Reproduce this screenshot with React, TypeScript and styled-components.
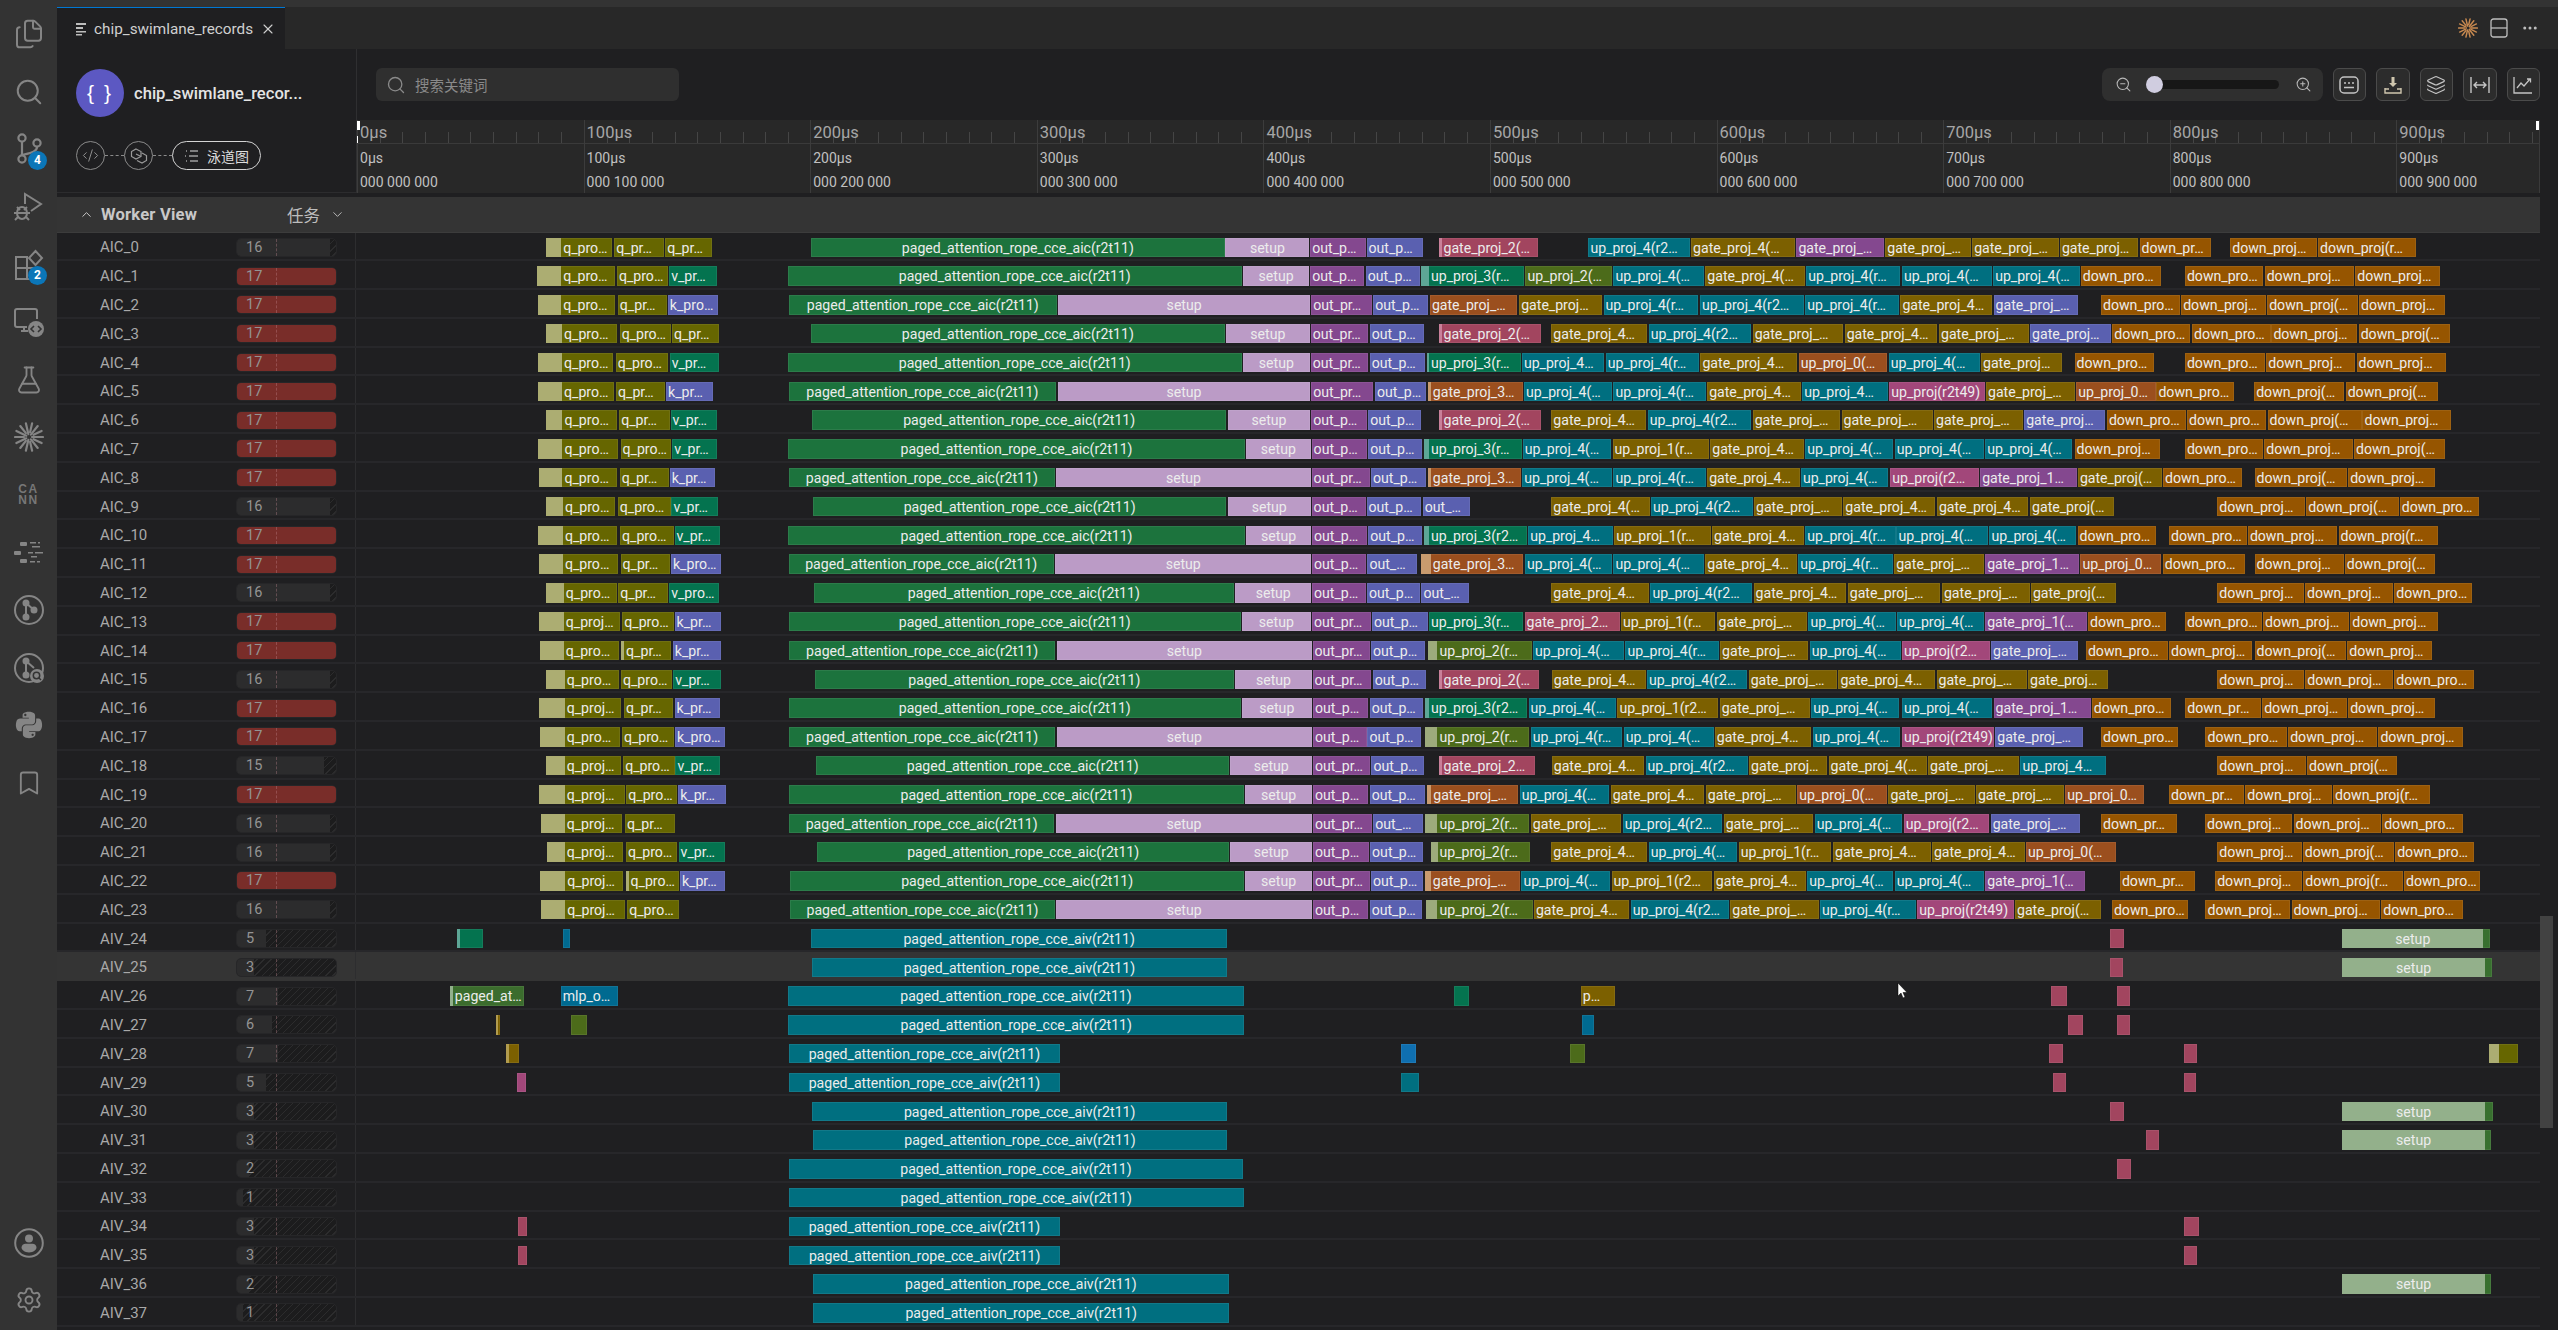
import React from 'react'
import styled, { createGlobalStyle } from 'styled-components'
import {
  Bookmark,
  ChevronDown,
  ChevronUp,
  CodeXml,
  Files,
  FlaskConical,
  Layers,
  MoreHorizontal,
  Search,
  Settings,
  X,
  ZoomIn,
  ZoomOut,
} from 'lucide-react'
import { FaPython } from 'react-icons/fa'

const UI_FONT = `Roboto, "Noto Sans CJK SC", sans-serif`

const GlobalStyle = createGlobalStyle`
  html, body { margin: 0; padding: 0; background: #333333; overflow: hidden; }
  * { box-sizing: border-box; }
  body { font-family: ${UI_FONT}; color: #cccccc; }
`

// coordinates were read from crops, each helper turns crop x into page x
const A = (x: number) => 500 + x / 2.24
const B = (x: number) => 1200 + x / 2.24
const C = (x: number) => 1900 + x / 2.383
const D = (x: number) => 400 + x / 1.742
const E = (x: number) => 1300 + x / 1.2464

type Bar = [number, number, string, string?, number?]

const AIC = 'paged_attention_rope_cce_aic(r2t11)'
const AIV = 'paged_attention_rope_cce_aiv(r2t11)'

const rowsData: { name: string; value: number; bars: Bar[] }[] = [
  { name: 'AIC_0', value: 16, bars: [
    [A(102), A(250), 'o', 'q_pro…', A(137)], [A(256), A(367), 'o', 'q_pr…'], [A(370), A(476), 'o', 'q_pr…'],
    [A(697), B(55), 'g', AIC], [B(57), B(245), 's', 'setup'], [B(247), B(371), 'p', 'out_p…'], [B(373), B(500), 'b', 'out_p…'],
    [B(535), B(757), 'r', 'gate_proj_2(…', B(541)], [B(870), B(1098), 'c', 'up_proj_4(r2…'], [B(1100), B(1333), 'y', 'gate_proj_4(…'],
    [B(1336), B(1533), 'p', 'gate_proj_…'], [B(1535), C(169), 'y', 'gate_proj_…'], [C(172), C(378), 'y', 'gate_proj_…'], [C(381), C(568), 'y', 'gate_proj…'],
    [C(571), C(742), 'd', 'down_pr…'], [C(787), C(994), 'd', 'down_proj…'], [C(996), C(1229), 'd', 'down_proj(r…'],
  ] },
  { name: 'AIC_1', value: 17, bars: [
    [A(83), A(258), 'o', 'q_pro…', A(137)], [A(262), A(376), 'o', 'q_pro…'], [A(379), A(486), 't', 'v_pr…'],
    [A(645), B(93), 'g', AIC], [B(96), B(245), 's', 'setup'], [B(247), B(368), 'p', 'out_p…'], [B(371), B(492), 'b', 'out_p…'],
    [B(495), B(726), 't', 'up_proj_3(r…', B(513)], [B(729), B(924), 'l', 'up_proj_2(…'], [B(926), B(1129), 'c', 'up_proj_4(…'], [B(1132), B(1355), 'y', 'gate_proj_4(…'],
    [B(1358), C(1), 'c', 'up_proj_4(r…'], [C(5), C(219), 'c', 'up_proj_4(…'], [C(222), C(428), 'c', 'up_proj_4(…'], [C(431), C(621), 'd', 'down_pro…'],
    [C(679), C(866), 'd', 'down_pro…'], [C(869), C(1083), 'd', 'down_proj…'], [C(1085), C(1287), 'd', 'down_proj…'],
  ] },
  { name: 'AIC_2', value: 17, bars: [
    [A(85), A(258), 'o', 'q_pro…', A(137)], [A(264), A(374), 'o', 'q_pr…'], [A(376), A(488), 'b', 'k_pro…'],
    [A(647), A(1247), 'g', AIC], [A(1250), B(247), 's', 'setup'], [B(249), B(385), 'p', 'out_pr…'], [B(388), B(511), 'b', 'out_p…'],
    [B(515), B(711), 'n', 'gate_proj_…'], [B(715), B(900), 'y', 'gate_proj…'], [B(904), B(1116), 'c', 'up_proj_4(r…'], [B(1120), B(1352), 'c', 'up_proj_4(r2…'],
    [B(1356), B(1565), 'c', 'up_proj_4(r…'], [C(1), C(220), 'y', 'gate_proj_4…'], [C(223), C(424), 'b', 'gate_proj_…'],
    [C(479), C(667), 'd', 'down_pro…'], [C(670), C(873), 'd', 'down_proj…'], [C(875), C(1091), 'd', 'down_proj(…'], [C(1094), C(1298), 'd', 'down_proj…'],
  ] },
  { name: 'AIC_3', value: 17, bars: [
    [A(102), A(262), 'o', 'q_pro…', A(139)], [A(268), A(382), 'o', 'q_pro…'], [A(385), A(491), 'o', 'q_pr…'],
    [A(697), B(55), 'g', AIC], [B(58), B(246), 's', 'setup'], [B(248), B(377), 'p', 'out_pr…'], [B(380), B(501), 'b', 'out_p…'],
    [B(535), B(764), 'r', 'gate_proj_2(…', B(541)], [B(787), B(1001), 'y', 'gate_proj_4…'], [B(1005), B(1235), 'c', 'up_proj_4(r2…'], [B(1238), B(1440), 'y', 'gate_proj_…'],
    [B(1444), C(88), 'y', 'gate_proj_4…'], [C(93), C(307), 'y', 'gate_proj_…'], [C(310), C(503), 'b', 'gate_proj…'],
    [C(506), C(691), 'd', 'down_pro…'], [C(696), C(883), 'd', 'down_pro…'], [C(885), C(1090), 'd', 'down_proj…'], [C(1093), C(1310), 'd', 'down_proj(…'],
  ] },
  { name: 'AIC_4', value: 17, bars: [
    [A(85), A(254), 'o', 'q_pro…', A(139)], [A(259), A(377), 'o', 'q_pro…'], [A(380), A(490), 't', 'v_pr…'],
    [A(645), B(93), 'g', AIC], [B(96), B(246), 's', 'setup'], [B(248), B(377), 'p', 'out_pr…'], [B(380), B(505), 'b', 'out_p…'],
    [B(508), B(718), 't', 'up_proj_3(r…', B(513)], [B(721), B(906), 'c', 'up_proj_4…'], [B(909), B(1118), 'c', 'up_proj_4(r…'], [B(1121), B(1338), 'y', 'gate_proj_4…'],
    [B(1341), B(1540), 'n', 'up_proj_0(…'], [B(1543), C(190), 'c', 'up_proj_4(…'], [C(193), C(386), 'y', 'gate_proj…'],
    [C(416), C(606), 'd', 'down_pro…'], [C(679), C(870), 'd', 'down_pro…'], [C(873), C(1085), 'd', 'down_proj…'], [C(1088), C(1301), 'd', 'down_proj…'],
  ] },
  { name: 'AIC_5', value: 17, bars: [
    [A(85), A(255), 'o', 'q_pro…', A(139)], [A(260), A(370), 'o', 'q_pr…'], [A(372), A(478), 'b', 'k_pr…'],
    [A(647), A(1245), 'g', AIC], [A(1249), B(247), 's', 'setup'], [B(249), B(388), 'p', 'out_pr…'], [B(392), B(507), 'b', 'out_p…'],
    [B(511), B(723), 'n', 'gate_proj_3…', B(517)], [B(726), B(923), 'c', 'up_proj_4(…'], [B(926), B(1133), 'c', 'up_proj_4(r…'], [B(1136), B(1346), 'y', 'gate_proj_4…'],
    [B(1349), B(1541), 'c', 'up_proj_4…'], [B(1544), C(203), 'm', 'up_proj(r2t49)'], [C(205), C(416), 'y', 'gate_proj_…'], [C(420), C(609), 'n', 'up_proj_0…'],
    [C(611), C(796), 'd', 'down_pro…'], [C(844), C(1059), 'd', 'down_proj(…'], [C(1062), C(1281), 'd', 'down_proj(…'],
  ] },
  { name: 'AIC_6', value: 17, bars: [
    [A(102), A(261), 'o', 'q_pro…', A(140)], [A(267), A(380), 'o', 'q_pr…'], [A(382), A(487), 't', 'v_pr…'],
    [A(699), B(59), 'g', AIC], [B(62), B(247), 's', 'setup'], [B(249), B(375), 'p', 'out_p…'], [B(377), B(494), 'b', 'out_p…'],
    [B(535), B(764), 'r', 'gate_proj_2(…', B(541)], [B(787), B(1000), 'y', 'gate_proj_4…'], [B(1003), B(1235), 'c', 'up_proj_4(r2…'], [B(1238), B(1434), 'y', 'gate_proj_…'],
    [B(1437), C(78), 'y', 'gate_proj_…'], [C(81), C(294), 'y', 'gate_proj_…'], [C(296), C(488), 'b', 'gate_proj…'],
    [C(493), C(681), 'd', 'down_pro…'], [C(684), C(873), 'd', 'down_pro…'], [C(876), C(1100), 'd', 'down_proj(…'], [C(1102), C(1312), 'd', 'down_proj…'],
  ] },
  { name: 'AIC_7', value: 17, bars: [
    [A(85), A(264), 'o', 'q_pro…', A(140)], [A(270), A(384), 'o', 'q_pro…'], [A(386), A(486), 't', 'v_pr…'],
    [A(645), B(101), 'g', AIC], [B(103), B(248), 's', 'setup'], [B(250), B(374), 'p', 'out_p…'], [B(377), B(498), 'b', 'out_p…'],
    [B(501), B(721), 't', 'up_proj_3(r…', B(513)], [B(723), B(921), 'c', 'up_proj_4(…'], [B(924), B(1141), 'y', 'up_proj_1(r…'], [B(1143), B(1353), 'y', 'gate_proj_4…'],
    [B(1356), B(1553), 'c', 'up_proj_4(…'], [B(1556), C(200), 'c', 'up_proj_4(…'], [C(203), C(410), 'c', 'up_proj_4(…'], [C(416), C(619), 'd', 'down_proj…'],
    [C(679), C(865), 'd', 'down_pro…'], [C(868), C(1080), 'd', 'down_proj…'], [C(1082), C(1298), 'd', 'down_proj(…'],
  ] },
  { name: 'AIC_8', value: 17, bars: [
    [A(87), A(261), 'o', 'q_pro…', A(140)], [A(268), A(378), 'o', 'q_pr…'], [A(380), A(481), 'b', 'k_pr…'],
    [A(647), A(1243), 'g', AIC], [A(1246), B(248), 's', 'setup'], [B(250), B(380), 'p', 'out_pr…'], [B(383), B(507), 'b', 'out_p…'],
    [B(511), B(719), 'n', 'gate_proj_3…', B(517)], [B(722), B(923), 'c', 'up_proj_4(…'], [B(926), B(1133), 'c', 'up_proj_4(r…'], [B(1136), B(1343), 'y', 'gate_proj_4…'],
    [B(1346), B(1542), 'c', 'up_proj_4(…'], [B(1546), C(188), 'm', 'up_proj(r2…'], [C(191), C(421), 'p', 'gate_proj_1…'], [C(424), C(624), 'y', 'gate_proj(…'],
    [C(627), C(816), 'd', 'down_pro…'], [C(845), C(1065), 'd', 'down_proj(…'], [C(1068), C(1276), 'd', 'down_proj…'],
  ] },
  { name: 'AIC_9', value: 16, bars: [
    [A(103), A(258), 'o', 'q_pro…', A(141)], [A(264), A(382), 'o', 'q_pro…'], [A(384), A(488), 't', 'v_pr…'],
    [A(701), B(59), 'g', AIC], [B(62), B(248), 's', 'setup'], [B(250), B(371), 'p', 'out_p…'], [B(373), B(496), 'b', 'out_p…'], [B(499), B(604), 'b', 'out_…'],
    [B(787), B(1007), 'y', 'gate_proj_4(…'], [B(1010), B(1238), 'c', 'up_proj_4(r2…'], [B(1241), B(1437), 'y', 'gate_proj_…'],
    [B(1441), C(84), 'y', 'gate_proj_4…'], [C(88), C(306), 'y', 'gate_proj_4…'], [C(310), C(509), 'y', 'gate_proj(…'],
    [C(756), C(966), 'd', 'down_proj…'], [C(968), C(1189), 'd', 'down_proj(…'], [C(1191), C(1379), 'd', 'down_pro…'],
  ] },
  { name: 'AIC_10', value: 17, bars: [
    [A(85), A(262), 'o', 'q_pro…', A(141)], [A(269), A(389), 'o', 'q_pro…'], [A(391), A(493), 't', 'v_pr…'],
    [A(645), B(101), 'g', AIC], [B(103), B(249), 's', 'setup'], [B(251), B(375), 'p', 'out_p…'], [B(377), B(498), 'b', 'out_p…'],
    [B(501), B(733), 't', 'up_proj_3(r2…', B(513)], [B(735), B(925), 'c', 'up_proj_4…'], [B(928), B(1144), 'y', 'up_proj_1(r…'], [B(1147), B(1353), 'y', 'gate_proj_4…'],
    [B(1356), B(1558), 'c', 'up_proj_4(r…'], [B(1560), C(210), 'c', 'up_proj_4(…'], [C(213), C(420), 'c', 'up_proj_4(…'], [C(423), C(610), 'd', 'down_pro…'],
    [C(641), C(826), 'd', 'down_pro…'], [C(829), C(1042), 'd', 'down_proj…'], [C(1045), C(1283), 'd', 'down_proj(r…'],
  ] },
  { name: 'AIC_11', value: 17, bars: [
    [A(88), A(265), 'o', 'q_pro…', A(141)], [A(270), A(381), 'o', 'q_pr…'], [A(383), A(495), 'b', 'k_pro…'],
    [A(647), A(1240), 'g', AIC], [A(1244), B(249), 's', 'setup'], [B(251), B(372), 'p', 'out_p…'], [B(375), B(487), 'b', 'out_…'],
    [B(495), B(724), 'n', 'gate_proj_3…', B(517)], [B(728), B(923), 'c', 'up_proj_4(…'], [B(926), B(1129), 'c', 'up_proj_4(…'], [B(1132), B(1337), 'y', 'gate_proj_4…'],
    [B(1340), B(1552), 'c', 'up_proj_4(r…'], [B(1555), C(201), 'y', 'gate_proj_…'], [C(203), C(427), 'p', 'gate_proj_1…'], [C(430), C(623), 'n', 'up_proj_0…'],
    [C(626), C(821), 'd', 'down_pro…'], [C(845), C(1058), 'd', 'down_proj…'], [C(1060), C(1276), 'd', 'down_proj(…'],
  ] },
  { name: 'AIC_12', value: 16, bars: [
    [A(103), A(261), 'o', 'q_pro…', A(143)], [A(265), A(377), 'o', 'q_pr…'], [A(379), A(491), 't', 'v_pro…'],
    [A(703), B(76), 'g', AIC], [B(79), B(249), 's', 'setup'], [B(251), B(371), 'p', 'out_p…'], [B(374), B(493), 'b', 'out_p…'], [B(496), B(603), 'b', 'out_…'],
    [B(787), B(1006), 'y', 'gate_proj_4…'], [B(1009), B(1237), 'c', 'up_proj_4(r2…'], [B(1240), B(1448), 'y', 'gate_proj_4…'],
    [B(1451), C(96), 'y', 'gate_proj_…'], [C(100), C(309), 'y', 'gate_proj_…'], [C(312), C(514), 'y', 'gate_proj(…'],
    [C(756), C(962), 'd', 'down_proj…'], [C(965), C(1175), 'd', 'down_proj…'], [C(1178), C(1364), 'd', 'down_pro…'],
  ] },
  { name: 'AIC_13', value: 17, bars: [
    [A(87), A(269), 'o', 'q_proj…', A(143)], [A(274), A(389), 'o', 'q_pro…'], [A(391), A(495), 'b', 'k_pr…'],
    [A(647), B(91), 'g', AIC], [B(93), B(249), 's', 'setup'], [B(251), B(382), 'p', 'out_pr…'], [B(385), B(510), 'b', 'out_p…'],
    [B(513), B(724), 't', 'up_proj_3(r…'], [B(727), B(940), 'r', 'gate_proj_2…'], [B(943), B(1154), 'y', 'up_proj_1(r…'], [B(1157), B(1360), 'y', 'gate_proj_…'],
    [B(1363), B(1558), 'c', 'up_proj_4(…'], [B(1561), C(201), 'c', 'up_proj_4(…'], [C(203), C(445), 'p', 'gate_proj_1(…'], [C(448), C(635), 'd', 'down_pro…'],
    [C(679), C(862), 'd', 'down_pro…'], [C(865), C(1070), 'd', 'down_proj…'], [C(1073), C(1281), 'd', 'down_proj…'],
  ] },
  { name: 'AIC_14', value: 17, bars: [
    [A(89), A(267), 'o', 'q_pro…', A(143)], [A(272), A(384), 'o', 'q_pr…', A(278)], [A(387), A(494), 'b', 'k_pr…'],
    [A(647), A(1244), 'g', AIC], [A(1248), B(250), 's', 'setup'], [B(252), B(380), 'p', 'out_pr…'], [B(383), B(505), 'b', 'out_p…'],
    [B(510), B(743), 'l', 'up_proj_2(r…', B(532)], [B(746), B(949), 'c', 'up_proj_4(…'], [B(953), B(1162), 'c', 'up_proj_4(r…'], [B(1165), B(1363), 'y', 'gate_proj_…'],
    [B(1366), C(3), 'c', 'up_proj_4(…'], [C(5), C(215), 'm', 'up_proj(r2…'], [C(217), C(424), 'b', 'gate_proj_…'],
    [C(443), C(639), 'd', 'down_pro…'], [C(641), C(840), 'd', 'down_proj…'], [C(845), C(1064), 'd', 'down_proj(…'], [C(1066), C(1267), 'd', 'down_proj…'],
  ] },
  { name: 'AIC_15', value: 16, bars: [
    [A(102), A(267), 'o', 'q_pro…', A(145)], [A(271), A(386), 'o', 'q_pro…'], [A(388), A(494), 't', 'v_pr…'],
    [A(705), B(76), 'g', AIC], [B(79), B(250), 's', 'setup'], [B(252), B(384), 'p', 'out_pr…'], [B(387), B(507), 'b', 'out_p…'],
    [B(535), B(760), 'r', 'gate_proj_2(…', B(541)], [B(788), B(998), 'y', 'gate_proj_4…'], [B(1001), B(1226), 'c', 'up_proj_4(r2…'], [B(1229), B(1426), 'y', 'gate_proj_…'],
    [B(1430), C(84), 'y', 'gate_proj_4…'], [C(87), C(302), 'y', 'gate_proj_…'], [C(305), C(495), 'y', 'gate_proj…'],
    [C(756), C(963), 'd', 'down_proj…'], [C(966), C(1176), 'd', 'down_proj…'], [C(1178), C(1368), 'd', 'down_pro…'],
  ] },
  { name: 'AIC_16', value: 17, bars: [
    [A(88), A(272), 'o', 'q_proj…', A(145)], [A(278), A(388), 'o', 'q_pr…'], [A(391), A(493), 'b', 'k_pr…'],
    [A(647), B(91), 'g', AIC], [B(93), B(251), 's', 'setup'], [B(253), B(377), 'p', 'out_p…'], [B(380), B(500), 'b', 'out_p…'],
    [B(503), B(733), 't', 'up_proj_3(r2…', B(513)], [B(736), B(932), 'c', 'up_proj_4(…'], [B(935), B(1161), 'y', 'up_proj_1(r2…'], [B(1164), B(1366), 'y', 'gate_proj_…'],
    [B(1369), B(1566), 'c', 'up_proj_4(…'], [C(5), C(220), 'c', 'up_proj_4(…'], [C(223), C(455), 'p', 'gate_proj_1…'], [C(457), C(645), 'd', 'down_pro…'],
    [C(680), C(861), 'd', 'down_pr…'], [C(863), C(1065), 'd', 'down_proj…'], [C(1068), C(1274), 'd', 'down_proj…'],
  ] },
  { name: 'AIC_17', value: 17, bars: [
    [A(90), A(268), 'o', 'q_pro…', A(145)], [A(273), A(390), 'o', 'q_pro…'], [A(392), A(505), 'b', 'k_pro…'],
    [A(647), A(1244), 'g', AIC], [A(1247), B(251), 's', 'setup'], [B(253), B(373), 'p', 'out_p…'], [B(375), B(494), 'b', 'out_p…'],
    [B(505), B(738), 'l', 'up_proj_2(r…', B(532)], [B(741), B(946), 'c', 'up_proj_4(r…'], [B(949), B(1151), 'c', 'up_proj_4(…'], [B(1153), B(1369), 'y', 'gate_proj_4…'],
    [B(1372), B(1568), 'c', 'up_proj_4(…'], [C(5), C(225), 'm', 'up_proj(r2t49)'], [C(227), C(435), 'b', 'gate_proj_…'],
    [C(479), C(662), 'd', 'down_pro…'], [C(728), C(922), 'd', 'down_pro…'], [C(925), C(1137), 'd', 'down_proj…'], [C(1140), C(1341), 'd', 'down_proj…'],
  ] },
  { name: 'AIC_18', value: 15, bars: [
    [A(104), A(270), 'o', 'q_proj…', A(145)], [A(276), A(391), 'o', 'q_pro…'], [A(393), A(493), 't', 'v_pr…'],
    [A(708), B(66), 'g', AIC], [B(68), B(251), 's', 'setup'], [B(253), B(381), 'p', 'out_pr…'], [B(384), B(502), 'b', 'out_p…'],
    [B(535), B(751), 'r', 'gate_proj_2…', B(541)], [B(788), B(995), 'y', 'gate_proj_4…'], [B(998), B(1227), 'c', 'up_proj_4(r2…'], [B(1230), B(1405), 'y', 'gate_proj…'],
    [B(1408), C(65), 'y', 'gate_proj_4(…'], [C(67), C(284), 'y', 'gate_proj_…'], [C(287), C(490), 'c', 'up_proj_4…'],
    [C(756), C(968), 'd', 'down_proj…'], [C(970), C(1185), 'd', 'down_proj(…'],
  ] },
  { name: 'AIC_19', value: 17, bars: [
    [A(88), A(279), 'o', 'q_proj…', A(145)], [A(283), A(397), 'o', 'q_pro…'], [A(399), A(507), 'b', 'k_pr…'],
    [A(647), B(99), 'g', AIC], [B(101), B(251), 's', 'setup'], [B(253), B(377), 'p', 'out_p…'], [B(380), B(505), 'b', 'out_p…'],
    [B(508), B(713), 'n', 'gate_proj_…', B(518)], [B(716), B(916), 'c', 'up_proj_4(…'], [B(920), B(1130), 'y', 'gate_proj_4…'], [B(1133), B(1335), 'y', 'gate_proj_…'],
    [B(1338), B(1538), 'n', 'up_proj_0(…'], [B(1542), C(179), 'y', 'gate_proj_…'], [C(181), C(392), 'y', 'gate_proj_…'], [C(394), C(582), 'n', 'up_proj_0…'],
    [C(641), C(820), 'd', 'down_pr…'], [C(823), C(1029), 'd', 'down_proj…'], [C(1032), C(1264), 'd', 'down_proj(r…'],
  ] },
  { name: 'AIC_20', value: 16, bars: [
    [A(91), A(273), 'o', 'q_proj…', A(145)], [A(280), A(391), 'o', 'q_pr…'],
    [A(647), A(1242), 'g', AIC], [A(1245), B(251), 's', 'setup'], [B(253), B(385), 'p', 'out_pr…'], [B(388), B(500), 'b', 'out_…'],
    [B(505), B(737), 'l', 'up_proj_2(r…', B(532)], [B(741), B(944), 'y', 'gate_proj_…'], [B(947), B(1170), 'c', 'up_proj_4(r2…'], [B(1173), B(1374), 'y', 'gate_proj_…'],
    [B(1377), C(5), 'c', 'up_proj_4(…'], [C(9), C(213), 'm', 'up_proj(r2…'], [C(216), C(430), 'b', 'gate_proj_…'],
    [C(479), C(661), 'd', 'down_pr…'], [C(727), C(934), 'd', 'down_proj…'], [C(938), C(1146), 'd', 'down_proj…'], [C(1149), C(1342), 'd', 'down_pro…'],
  ] },
  { name: 'AIC_21', value: 16, bars: [
    [A(106), A(276), 'o', 'q_proj…', A(145)], [A(282), A(397), 'o', 'q_pro…'], [A(400), A(505), 't', 'v_pr…'],
    [A(710), B(66), 'g', AIC], [B(68), B(251), 's', 'setup'], [B(253), B(378), 'p', 'out_p…'], [B(381), B(499), 'b', 'out_p…'],
    [B(518), B(740), 'l', 'up_proj_2(r…', B(532)], [B(787), B(1002), 'y', 'gate_proj_4…'], [B(1005), B(1204), 'c', 'up_proj_4(…'], [B(1207), B(1414), 'y', 'up_proj_1(r…'],
    [B(1418), C(74), 'y', 'gate_proj_4…'], [C(76), C(297), 'y', 'gate_proj_4…'], [C(300), C(514), 'n', 'up_proj_0(…'],
    [C(756), C(957), 'd', 'down_proj…'], [C(960), C(1178), 'd', 'down_proj(…'], [C(1180), C(1368), 'd', 'down_pro…'],
  ] },
  { name: 'AIC_22', value: 17, bars: [
    [A(89), A(275), 'o', 'q_proj…', A(146)], [A(282), A(401), 'o', 'q_pro…', A(288)], [A(403), A(505), 'b', 'k_pr…'],
    [A(650), B(99), 'g', AIC], [B(101), B(251), 's', 'setup'], [B(253), B(380), 'p', 'out_pr…'], [B(383), B(500), 'b', 'out_p…'],
    [B(503), B(717), 'n', 'gate_proj_…', B(517)], [B(720), B(918), 'c', 'up_proj_4(…'], [B(922), B(1147), 'y', 'up_proj_1(r2…'], [B(1151), B(1357), 'y', 'gate_proj_4…'],
    [B(1360), B(1552), 'c', 'up_proj_4(…'], [B(1556), C(201), 'c', 'up_proj_4(…'], [C(203), C(441), 'p', 'gate_proj_1(…'],
    [C(524), C(703), 'd', 'down_pr…'], [C(751), C(958), 'd', 'down_proj…'], [C(961), C(1199), 'd', 'down_proj(r…'], [C(1201), C(1381), 'd', 'down_pro…'],
  ] },
  { name: 'AIC_23', value: 16, bars: [
    [A(92), A(279), 'o', 'q_proj…', A(146)], [A(285), A(401), 'o', 'q_pro…'],
    [A(650), A(1243), 'g', AIC], [A(1246), B(251), 's', 'setup'], [B(253), B(377), 'p', 'out_p…'], [B(380), B(498), 'b', 'out_p…'],
    [B(506), B(745), 'l', 'up_proj_2(r…', B(532)], [B(748), B(961), 'y', 'gate_proj_4…'], [B(965), B(1185), 'c', 'up_proj_4(r2…'], [B(1188), B(1386), 'y', 'gate_proj_…'],
    [B(1389), C(37), 'c', 'up_proj_4(r…'], [C(41), C(271), 'm', 'up_proj(r2t49)'], [C(274), C(479), 'y', 'gate_proj(…'],
    [C(505), C(687), 'd', 'down_pro…'], [C(728), C(930), 'd', 'down_proj…'], [C(933), C(1144), 'd', 'down_proj…'], [C(1147), C(1341), 'd', 'down_pro…'],
  ] },
  { name: 'AIV_24', value: 5, bars: [
    [D(100), D(145), 't', '', D(105)], [D(284), D(297), 'u'], [D(716), D(1441), 'q', AIV], [E(1009), E(1027), 'r'], [E(1299), E(1483), 'h', 'setup', E(1475)],
  ] },
  { name: 'AIV_25', value: 3, bars: [
    [D(717), D(1441), 'q', AIV], [E(1009), E(1026), 'r'], [E(1299), E(1486), 'h', 'setup', E(1477)],
  ] },
  { name: 'AIV_26', value: 7, bars: [
    [D(87), D(216), 'f', 'paged_at…', D(92)], [D(280), D(380), 'u', 'mlp_o…'], [D(676), D(1470), 'q', AIV], [E(192), E(211), 't'], [E(350), E(393), 'y', 'p…'],
    [E(936), E(956), 'r'], [E(1018), E(1035), 'r'],
  ] },
  { name: 'AIV_27', value: 6, bars: [
    [D(167), D(174), 'y', '', D(170)], [D(298), D(325), 'l'], [D(676), D(1471), 'q', AIV], [E(351), E(366), 'u'], [E(957), E(976), 'r'], [E(1018), E(1035), 'r'],
  ] },
  { name: 'AIV_28', value: 7, bars: [
    [D(185), D(207), 'y', '', D(190)], [D(677), D(1150), 'q', AIV], [E(126), E(144), 'v'], [E(336), E(355), 'l'], [E(933), E(951), 'r'], [E(1102), E(1118), 'r'],
    [E(1482), E(1518), 'o', '', E(1495)],
  ] },
  { name: 'AIV_29', value: 5, bars: [
    [D(204), D(220), 'm'], [D(677), D(1150), 'q', AIV], [E(126), E(148), 'c'], [E(938), E(955), 'r'], [E(1102), E(1117), 'r'],
  ] },
  { name: 'AIV_30', value: 3, bars: [
    [D(718), D(1441), 'q', AIV], [E(1009), E(1027), 'r'], [E(1299), E(1487), 'h', 'setup', E(1477)],
  ] },
  { name: 'AIV_31', value: 3, bars: [
    [D(719), D(1441), 'q', AIV], [E(1054), E(1071), 'r'], [E(1299), E(1485), 'h', 'setup', E(1477)],
  ] },
  { name: 'AIV_32', value: 2, bars: [[D(677), D(1469), 'q', AIV], [E(1018), E(1036), 'r']] },
  { name: 'AIV_33', value: 1, bars: [[D(677), D(1470), 'q', AIV]] },
  { name: 'AIV_34', value: 3, bars: [[D(205), D(222), 'r'], [D(678), D(1149), 'q', AIV], [E(1102), E(1121), 'r']] },
  { name: 'AIV_35', value: 3, bars: [[D(205), D(222), 'r'], [D(678), D(1150), 'q', AIV], [E(1102), E(1118), 'r']] },
  { name: 'AIV_36', value: 2, bars: [[D(719), D(1444), 'q', AIV], [E(1299), E(1485), 'h', 'setup', E(1477)]] },
  { name: 'AIV_37', value: 1, bars: [[D(720), D(1444), 'q', AIV]] },
]

const BAR_COLORS: Record<string, string> = {
  o: '#666600',
  g: '#1c733d',
  t: '#04734f',
  b: '#5a60b0',
  p: '#84488f',
  s: '#bb9bc6',
  r: '#a2455f',
  c: '#006f80',
  y: '#7c6000',
  n: '#9b4f1e',
  d: '#965500',
  l: '#4c6b1a',
  m: '#a2477a',
  q: '#006f80',
  h: '#38702f',
  u: '#006a90',
  v: '#0f6fb0',
  f: '#3b6c2d',
}

const LEAD_COLORS: Record<string, string> = {
  o: '#acad72',
  t: '#5da696',
  l: '#9dab7c',
  n: '#c99b6e',
  r: '#c9809a',
  y: '#b29c4f',
  f: '#92b08c',
  h: '#93b08b',
}

const ticks = ['0', '100', '200', '300', '400', '500', '600', '700', '800', '900']

const TRACK_LEFT = 356

const Page = styled.div`
  position: relative;
  display: flex;
  width: 2558px;
  height: 1330px;
  overflow: hidden;
  background: #333333;
`

const ActivityBar = styled.nav`
  flex: 0 0 57px;
  display: flex;
  flex-direction: column;
  justify-content: space-between;
  padding: 5.5px 0 1px;
  color: #858585;
`

const ActivityGroup = styled.div`
  display: flex;
  flex-direction: column;
`

const ActivityItem = styled.div`
  position: relative;
  height: 57.6px;
  display: flex;
  align-items: center;
  justify-content: center;
`

const Badge = styled.span`
  position: absolute;
  left: 28px;
  top: 30px;
  width: 19px;
  height: 19px;
  border-radius: 50%;
  background: #0b76b8;
  color: #ffffff;
  font-size: 12px;
  font-weight: 700;
  line-height: 19px;
  text-align: center;
`

const CannMark = styled.span`
  width: 30px;
  font-family: 'Liberation Sans', sans-serif;
  font-size: 12px;
  line-height: 11px;
  font-weight: 700;
  letter-spacing: 1.5px;
  color: #777777;
  text-align: center;
`

const Main = styled.main`
  flex: 1;
  min-width: 0;
  margin-top: 7px;
  display: flex;
  flex-direction: column;
  background: #1f1f21;
`

const TabBar = styled.div`
  flex: 0 0 42px;
  display: flex;
  align-items: stretch;
  justify-content: space-between;
  background: #282828;
`

const Tab = styled.div`
  width: 228px;
  display: flex;
  align-items: center;
  gap: 7px;
  padding-left: 19px;
  background: #1f1f21;
  border-top: 1px solid #0078d4;
  color: #d0d0d0;
  font-size: 15.3px;
`

const TabTitle = styled.span`
  flex: 0 0 157px;
  white-space: nowrap;
`

const TabActions = styled.div`
  display: flex;
  align-items: center;
  gap: 9px;
  padding-right: 17px;
  color: #bdbdbd;
`

const TabAction = styled.span`
  width: 22px;
  height: 22px;
  display: flex;
  align-items: center;
  justify-content: center;
`

const Content = styled.div`
  flex: 1;
  min-height: 0;
  display: flex;
  flex-direction: column;
  padding-right: 18px;
`

const Header = styled.header`
  flex: 0 0 144px;
  display: flex;
`

const FileCard = styled.div`
  flex: 0 0 299px;
  display: flex;
  flex-direction: column;
  gap: 24px;
  padding: 20px 0 0 19px;
  border-bottom: 1px solid #2c2c2e;
`

const FileTitle = styled.div`
  display: flex;
  align-items: center;
  gap: 10px;
`

const FileLogo = styled.div`
  width: 48px;
  height: 48px;
  border-radius: 50%;
  background: #5c58c2;
  color: #ffffff;
  display: flex;
  align-items: center;
  justify-content: center;
  font-family: 'Liberation Sans', sans-serif;
  font-size: 21px;
  letter-spacing: 2px;
`

const FileName = styled.div`
  font-size: 16.6px;
  font-weight: 500;
  color: #e4e4e4;
  white-space: nowrap;
`

const Steps = styled.div`
  display: flex;
  align-items: center;
  height: 29px;
`

const StepCircle = styled.span`
  width: 29px;
  height: 29px;
  border: 1px solid #8b8b8b;
  border-radius: 50%;
  display: flex;
  align-items: center;
  justify-content: center;
  color: #9a9a9a;
`

const StepDash = styled.span`
  width: 19px;
  border-top: 1px dashed #8b8b8b;
`

const StepPill = styled.span`
  width: 89px;
  height: 29px;
  border: 1px solid #d4d4d4;
  border-radius: 15px;
  display: flex;
  align-items: center;
  justify-content: center;
  gap: 7px;
  font-size: 14px;
  color: #dddddd;
`

const TimelineHeader = styled.div`
  flex: 1;
  min-width: 0;
  display: flex;
  flex-direction: column;
  border-left: 1px solid #2f2f31;
`

const Toolbar = styled.div`
  flex: 0 0 71px;
  display: flex;
  justify-content: space-between;
  padding: 19px 0 19px 19px;
`

const SearchBox = styled.div`
  width: 303px;
  display: flex;
  align-items: center;
  gap: 9px;
  padding-left: 10px;
  background: #2f2f2f;
  border-radius: 6px;
  color: #8a8a8a;
  font-size: 14.5px;
`

const Tools = styled.div`
  display: flex;
  gap: 10px;
`

const ZoomGroup = styled.div`
  width: 221px;
  display: flex;
  align-items: center;
  justify-content: space-between;
  padding: 0 11px 0 13px;
  background: #2f2f2f;
  border-radius: 8px;
  color: #b8b8b8;
`

const SliderTrack = styled.div`
  position: relative;
  width: 125px;
  height: 9px;
  margin-left: 6px;
  border-radius: 5px;
  background: #171717;
`

const SliderKnob = styled.span`
  position: absolute;
  left: -8px;
  top: -4px;
  width: 17px;
  height: 17px;
  border-radius: 50%;
  background: #d0cde0;
`

const ToolButton = styled.button`
  width: 33.5px;
  padding: 0;
  display: flex;
  align-items: center;
  justify-content: center;
  background: #2c2c2c;
  border: 1px solid #4b4b4b;
  border-radius: 6px;
  color: #c4c4c4;
`

const Ruler = styled.div`
  position: relative;
  flex: 1;
  display: flex;
  overflow: hidden;
  background: #282828;
  color: #c0c0c0;
  border-right: 1px solid #3a3a3a;
`

const RulerSpan = styled.div`
  flex: 0 0 226.6px;
  border-left: 1px solid #3c3c3c;
  display: flex;
  flex-direction: column;
`

const RulerTop = styled.div`
  height: 24px;
  padding-left: 2px;
  font-size: 16.5px;
  line-height: 25px;
  color: #a6a6a6;
  border-bottom: 1px solid #3a3a3a;
  background: repeating-linear-gradient(90deg, transparent 0 21.66px, #454545 21.66px 22.66px) left bottom / 100% 11px no-repeat;
`

const RulerMid = styled.div`
  height: 26px;
  padding-left: 2px;
  font-size: 14px;
  line-height: 28px;
`

const RulerBottom = styled(RulerMid)`
  height: 23px;
  line-height: 24px;
`

const RulerStart = styled.span`
  position: absolute;
  left: 0;
  top: 1px;
  width: 3px;
  height: 9px;
  background: #ffffff;
  box-shadow: -1px 14px 0 -1px #ffffff;
`

const RulerEnd = styled.span`
  position: absolute;
  right: 0;
  top: 1px;
  width: 3px;
  height: 9px;
  background: #ffffff;
`

const Gap = styled.div`
  flex: 0 0 4px;
`

const SectionHeader = styled.div`
  flex: 0 0 35.5px;
  display: flex;
  align-items: center;
  padding: 1px 0 0 22px;
  background: #343434;
  border-bottom: 1px solid #3c3c3c;
  color: #c8c8c8;
`

const SectionTitle = styled.span`
  flex: 0 0 186px;
  margin-left: 7px;
  font-size: 16.6px;
  font-weight: 700;
  letter-spacing: 0.2px;
`

const SectionKind = styled.span`
  font-size: 16.5px;
  margin-right: 10px;
  color: #bdbdbd;
`

const Rows = styled.div`
  display: flex;
  flex-direction: column;
`

const Row = styled.div<{ $hover: boolean }>`
  height: 28.8px;
  display: flex;
  background: ${(p) => (p.$hover ? '#343434' : '#1f1f21')};
  border-bottom: 2px solid ${(p) => (p.$hover ? '#343434' : '#27272a')};
`

const NameCell = styled.div`
  flex: 0 0 299px;
  display: flex;
  align-items: center;
  padding: 3px 0 0 43px;
  border-right: 1px solid #2d2d2f;
`

const WorkerName = styled.span`
  flex: 0 0 136px;
  font-size: 15px;
  color: #a9a9a9;
`

const Usage = styled.div`
  position: relative;
  width: 101px;
  height: 19px;
  border-radius: 5px;
  overflow: hidden;
  background: repeating-linear-gradient(135deg, #1c1c1d 0 4px, #2c2c2d 4px 5px);
  border: 1px solid #262628;
`

const UsageFill = styled.div<{ $over: boolean }>`
  height: 100%;
  background: ${(p) => (p.$over ? '#792d29' : '#2c2c2d')};
`

const UsageValue = styled.span`
  position: absolute;
  left: 9px;
  top: 0;
  font-size: 14.5px;
  line-height: 18px;
  color: #949494;
`

const UsageMark = styled.span`
  position: absolute;
  left: 39px;
  top: 0;
  height: 100%;
  border-left: 1px dashed rgba(200, 140, 150, 0.35);
`

const Track = styled.div`
  position: relative;
  flex: 1;
`

const BarBlock = styled.div.attrs<{ $left: number; $width: number }>((p) => ({
  style: { left: `${p.$left}px`, width: `${p.$width}px` },
}))<{ $left: number; $width: number; $kind: string }>`
  position: absolute;
  top: 5.2px;
  height: 19.4px;
  overflow: hidden;
  display: flex;
  background: ${(p) => BAR_COLORS[p.$kind]};
  box-shadow: inset 0 0 0 1px rgba(255, 255, 255, 0.07);
`

const BarLead = styled.span.attrs<{ $size: number }>((p) => ({
  style: { width: `${p.$size}px` },
}))<{ $size: number; $kind: string }>`
  flex: none;
  height: 100%;
  background: ${(p) => LEAD_COLORS[p.$kind] || '#aaaaaa'};
`

const BarLabel = styled.span<{ $center: boolean }>`
  flex: 1;
  min-width: 0;
  padding-left: ${(p) => (p.$center ? 0 : 2)}px;
  font-size: 14.1px;
  line-height: 20px;
  color: #ececec;
  white-space: nowrap;
  overflow: hidden;
  text-align: ${(p) => (p.$center ? 'center' : 'left')};
`

const SetupPart = styled.span.attrs<{ $size: number }>((p) => ({
  style: { width: `${p.$size}px` },
}))<{ $size: number }>`
  flex: none;
  height: 100%;
  background: #93b08b;
  font-size: 14.1px;
  line-height: 20px;
  color: #ececec;
  text-align: center;
`

const Scrollbar = styled.div`
  position: absolute;
  left: 2540px;
  top: 916px;
  width: 13px;
  height: 212px;
  background: #424242;
`

const Cursor = styled.svg`
  position: absolute;
  left: 1897px;
  top: 983px;
`

const GitIcon = () => (
  <svg width="30" height="34" viewBox="0 0 30 34" fill="none" stroke="currentColor" strokeWidth="2.2">
    <circle cx="8" cy="6" r="3.6" />
    <circle cx="8" cy="27" r="3.6" />
    <circle cx="23" cy="11" r="3.6" />
    <path d="M8 10v13M23 15c0 5-7 6-15 8" />
  </svg>
)

const DebugIcon = () => (
  <svg width="32" height="32" viewBox="0 0 32 32" fill="none" stroke="currentColor" strokeWidth="2">
    <path d="M12 13V3l16 10-10 7" />
    <ellipse cx="9" cy="22" rx="5" ry="6" />
    <path d="M4 16l3 3M14 16l-3 3M1 22h3M14 22h3M2 29l3-3M16 29l-3-3M4 22h10" />
  </svg>
)

const ExtensionsIcon = () => (
  <svg width="30" height="32" viewBox="0 0 30 32" fill="none" stroke="currentColor" strokeWidth="2">
    <rect x="2" y="8" width="11" height="11" />
    <rect x="2" y="19" width="11" height="11" />
    <rect x="13" y="19" width="11" height="11" />
    <path d="M21.5 2l6.5 7-6.5 7-6.5-7z" />
  </svg>
)

const RemoteIcon = () => (
  <svg width="32" height="32" viewBox="0 0 32 32" fill="none" stroke="currentColor" strokeWidth="2">
    <path d="M14 21H4a2 2 0 0 1-2-2V5a2 2 0 0 1 2-2h18a2 2 0 0 1 2 2v8M8 25h7M11 21v4" />
    <circle cx="23" cy="23" r="8" fill="#858585" stroke="none" />
    <path d="M21 20l-3 3 3 3M25 20l3 3-3 3" stroke="#333333" strokeWidth="1.6" />
  </svg>
)

const BurstIcon = ({ size = 30, color = 'currentColor' }: { size?: number; color?: string }) => (
  <svg width={size} height={size} viewBox="0 0 30 30" stroke={color} strokeWidth="2.2" strokeLinecap="round">
    {Array.from({ length: 14 }, (_, i) => {
      const a = (i / 14) * Math.PI * 2
      const inner = i % 2 ? 5 : 3
      return (
        <line
          key={i}
          x1={15 + Math.cos(a) * inner}
          y1={15 + Math.sin(a) * inner}
          x2={15 + Math.cos(a) * 14}
          y2={15 + Math.sin(a) * 14}
        />
      )
    })}
  </svg>
)

const FlowIcon = () => (
  <svg width="30" height="24" viewBox="0 0 30 24" fill="currentColor">
    <rect x="6" y="1" width="7" height="4" rx="1" />
    <rect x="0" y="10" width="7" height="4" rx="1" />
    <rect x="6" y="18" width="7" height="4" rx="1" />
    <path d="M16 1h6v1.5h-6zM24 1h2v1.5h-2zM18 5h8v1.5h-8zM14 11h5v1.5h-5zM21 11h8v1.5h-8zM17 15h6v1.5h-6zM16 20h5v1.5h-5zM23 20h3v1.5h-3z" />
  </svg>
)

const GraphIcon = ({ withSearch }: { withSearch?: boolean }) => (
  <svg width="32" height="32" viewBox="0 0 32 32" fill="none" stroke="currentColor" strokeWidth="2">
    <circle cx="16" cy="16" r="14" />
    <circle cx="13" cy="9" r="2.5" fill="currentColor" />
    <circle cx="13" cy="23" r="2.5" fill="currentColor" />
    {!withSearch && <circle cx="21" cy="16" r="2.5" fill="currentColor" />}
    <path d="M13 9v14M13 9l8 7" />
    {withSearch && (
      <>
        <circle cx="24" cy="24" r="7" fill="#858585" stroke="none" />
        <circle cx="23.5" cy="23.5" r="3.2" stroke="#333333" strokeWidth="1.5" />
        <path d="M26 26l2 2" stroke="#333333" strokeWidth="1.5" />
      </>
    )}
  </svg>
)

const AccountIcon = () => (
  <svg width="30" height="30" viewBox="0 0 30 30" fill="none">
    <circle cx="15" cy="15" r="13.8" stroke="currentColor" strokeWidth="2" />
    <circle cx="15" cy="10.5" r="4" fill="currentColor" />
    <path d="M7.5 19.5c0-2.5 2-3.8 4-3.8h7c2 0 4 1.3 4 3.8 0 2-3 5-7.5 5s-7.5-3-7.5-5z" fill="currentColor" />
  </svg>
)

const TabFileIcon = () => (
  <svg width="11" height="14" viewBox="0 0 11 14" fill="#bdbdbd">
    <path d="M0 1h10v2H0zM0 5h7v2H0zM0 9h10v1.5H0zM0 12h6v1.5H0z" />
  </svg>
)

const SplitIcon = () => (
  <svg width="18" height="20" viewBox="0 0 18 20" fill="none" stroke="currentColor" strokeWidth="1.3">
    <rect x="1" y="1" width="16" height="18" rx="2.5" />
    <path d="M1 10h16" />
  </svg>
)

const HexIcon = () => (
  <svg width="18" height="18" viewBox="0 0 18 18" fill="none" stroke="currentColor" strokeWidth="1.2">
    <path d="M6 2l5 2.5v5L6 12 1.5 9.500v-5zM12 6l4.500 2.500v5L12 16l-5-2.500" />
    <path d="M6 7l5 2.500" />
  </svg>
)

const ListIcon = () => (
  <svg width="16" height="16" viewBox="0 0 16 16" fill="none" stroke="currentColor" strokeWidth="1.2">
    <path d="M2 3h1M6 3h8M1 8h1M5 8h9M2 13h1M6 13h8" />
  </svg>
)

const CaptionIcon = () => (
  <svg width="20" height="18" viewBox="0 0 20 18" fill="none" stroke="currentColor" strokeWidth="1.5">
    <rect x="1" y="1" width="18" height="16" rx="4" />
    <path d="M5 7h2M9 7h2M13 7h2M5 11.5h10" />
  </svg>
)

const DownloadIcon = () => (
  <svg width="20" height="20" viewBox="0 0 20 20" fill="none" stroke="#cfc6ae" strokeWidth="1.4">
    <path d="M8.5 2h3v6h2.5L10 12 6 8h2.5z" fill="#cfc6ae" stroke="none" />
    <path d="M2 13v5h16v-5M2 14h4M14 14h4" />
  </svg>
)

const FitIcon = () => (
  <svg width="20" height="18" viewBox="0 0 20 18" fill="none" stroke="currentColor" strokeWidth="1.4">
    <path d="M1 1v16M19 1v16M4 9h12M7 6L4 9l3 3M13 6l3 3-3 3" />
  </svg>
)

const ChartIcon = () => (
  <svg width="20" height="18" viewBox="0 0 20 18" fill="none" stroke="currentColor" strokeWidth="1.3">
    <path d="M1 1v16h18M4 12l4-5 3 3 6-7M14 3h3.5v3.5" />
  </svg>
)

const CursorIcon = () => (
  <Cursor width="10" height="16" viewBox="0 0 10 16">
    <path d="M1 0v13l3-3 2 5 2-1-2-4.5h4z" fill="#ffffff" stroke="#000000" strokeWidth="0.5" />
  </Cursor>
)

const TimelineBar = ({ bar }: { bar: Bar }) => {
  const [start, end, kind, label, mark] = bar
  const width = end - start
  const left = start - TRACK_LEFT
  const center = label === AIC || label === AIV || label === 'setup'
  if (kind === 'h' && mark) {
    return (
      <BarBlock $left={left} $width={width} $kind={kind}>
        <SetupPart $size={mark - start}>{label}</SetupPart>
      </BarBlock>
    )
  }
  return (
    <BarBlock $left={left} $width={width} $kind={kind}>
      {mark && <BarLead $size={mark - start} $kind={kind} />}
      {label && <BarLabel $center={center}>{label}</BarLabel>}
    </BarBlock>
  )
}

const App = () => (
  <Page>
    <GlobalStyle />
    <ActivityBar>
      <ActivityGroup>
        <ActivityItem>
          <Files size={32} strokeWidth={1.5} />
        </ActivityItem>
        <ActivityItem>
          <Search size={30} strokeWidth={1.6} />
        </ActivityItem>
        <ActivityItem>
          <GitIcon />
          <Badge>4</Badge>
        </ActivityItem>
        <ActivityItem>
          <DebugIcon />
        </ActivityItem>
        <ActivityItem>
          <ExtensionsIcon />
          <Badge>2</Badge>
        </ActivityItem>
        <ActivityItem>
          <RemoteIcon />
        </ActivityItem>
        <ActivityItem>
          <FlaskConical size={30} strokeWidth={1.5} />
        </ActivityItem>
        <ActivityItem>
          <BurstIcon />
        </ActivityItem>
        <ActivityItem>
          <CannMark>
            CA
            <br />
            NN
          </CannMark>
        </ActivityItem>
        <ActivityItem>
          <FlowIcon />
        </ActivityItem>
        <ActivityItem>
          <GraphIcon />
        </ActivityItem>
        <ActivityItem>
          <GraphIcon withSearch />
        </ActivityItem>
        <ActivityItem>
          <FaPython size={30} />
        </ActivityItem>
        <ActivityItem>
          <Bookmark size={28} strokeWidth={1.6} />
        </ActivityItem>
      </ActivityGroup>
      <ActivityGroup>
        <ActivityItem>
          <AccountIcon />
        </ActivityItem>
        <ActivityItem>
          <Settings size={28} strokeWidth={1.6} />
        </ActivityItem>
      </ActivityGroup>
    </ActivityBar>
    <Main>
      <TabBar>
        <Tab>
          <TabFileIcon />
          <TabTitle>chip_swimlane_records</TabTitle>
          <X size={16} strokeWidth={1.6} />
        </Tab>
        <TabActions>
          <TabAction>
            <BurstIcon size={20} color="#c98a50" />
          </TabAction>
          <TabAction>
            <SplitIcon />
          </TabAction>
          <TabAction>
            <MoreHorizontal size={18} />
          </TabAction>
        </TabActions>
      </TabBar>
      <Content>
        <Header>
          <FileCard>
            <FileTitle>
              <FileLogo>{'{ }'}</FileLogo>
              <FileName>chip_swimlane_recor...</FileName>
            </FileTitle>
            <Steps>
              <StepCircle>
                <CodeXml size={17} strokeWidth={1.3} />
              </StepCircle>
              <StepDash />
              <StepCircle>
                <HexIcon />
              </StepCircle>
              <StepDash />
              <StepPill>
                <ListIcon />
                泳道图
              </StepPill>
            </Steps>
          </FileCard>
          <TimelineHeader>
            <Toolbar>
              <SearchBox>
                <Search size={20} strokeWidth={1.6} />
                搜索关键词
              </SearchBox>
              <Tools>
                <ZoomGroup>
                  <ZoomOut size={17} strokeWidth={1.5} />
                  <SliderTrack>
                    <SliderKnob />
                  </SliderTrack>
                  <ZoomIn size={17} strokeWidth={1.5} />
                </ZoomGroup>
                <ToolButton>
                  <CaptionIcon />
                </ToolButton>
                <ToolButton>
                  <DownloadIcon />
                </ToolButton>
                <ToolButton>
                  <Layers size={20} strokeWidth={1.4} />
                </ToolButton>
                <ToolButton>
                  <FitIcon />
                </ToolButton>
                <ToolButton>
                  <ChartIcon />
                </ToolButton>
              </Tools>
            </Toolbar>
            <Ruler>
              {ticks.map((t) => (
                <RulerSpan key={t}>
                  <RulerTop>{t}μs</RulerTop>
                  <RulerMid>{t}μs</RulerMid>
                  <RulerBottom>000 {t === '0' ? '000' : t} 000</RulerBottom>
                </RulerSpan>
              ))}
              <RulerStart />
              <RulerEnd />
            </Ruler>
          </TimelineHeader>
        </Header>
        <Gap />
        <SectionHeader>
          <ChevronUp size={15} strokeWidth={1.6} />
          <SectionTitle>Worker View</SectionTitle>
          <SectionKind>任务</SectionKind>
          <ChevronDown size={15} strokeWidth={1.4} />
        </SectionHeader>
        <Rows>
          {rowsData.map((row) => (
            <Row key={row.name} $hover={row.name === 'AIV_25'}>
              <NameCell>
                <WorkerName>{row.name}</WorkerName>
                <Usage>
                  <UsageFill $over={row.value >= 17} style={{ width: `${(row.value / 17) * 100}%` }} />
                  <UsageMark />
                  <UsageValue>{row.value}</UsageValue>
                </Usage>
              </NameCell>
              <Track>
                {row.bars.map((bar, i) => (
                  <TimelineBar key={i} bar={bar} />
                ))}
              </Track>
            </Row>
          ))}
        </Rows>
      </Content>
    </Main>
    <Scrollbar />
    <CursorIcon />
  </Page>
)

export default App
